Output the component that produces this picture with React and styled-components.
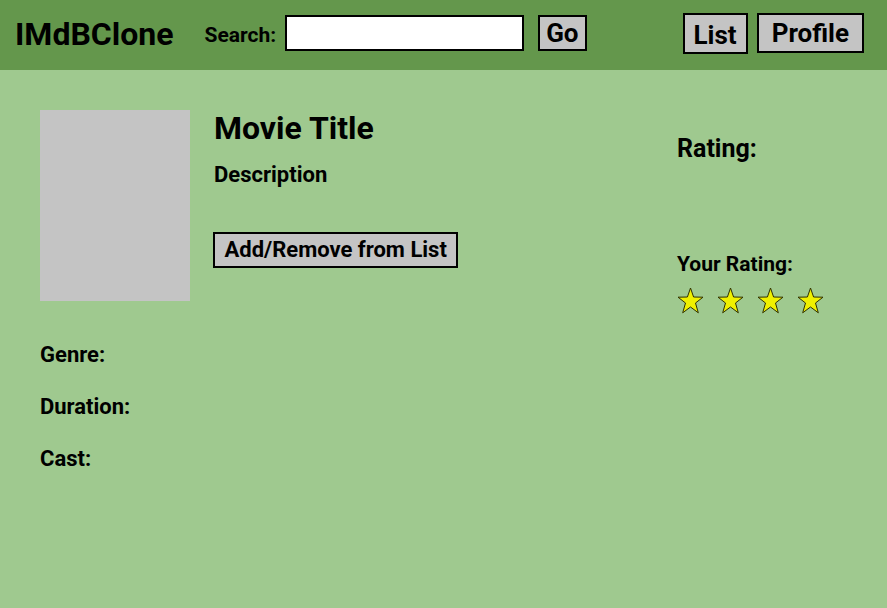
import React from "react";
import styled, { createGlobalStyle } from "styled-components";

const Global = createGlobalStyle`
  html, body { margin: 0; padding: 0; }
  body {
    font-family: Roboto, "Liberation Sans", sans-serif;
    background: #9fc98f;
    color: #000;
  }
  * { box-sizing: border-box; }
`;

const Page = styled.div`
  min-height: 608px;
  background: #9fc98f;
`;

const Header = styled.header`
  height: 70px;
  background: #64974c;
  display: flex;
  align-items: center;
  padding: 0 23px 4px 15px;
`;

const Logo = styled.div`
  font-size: 32px;
  font-weight: 700;
  margin: 2px 31px 0 0;
`;

const SearchLabel = styled.label`
  font-size: 21px;
  font-weight: 700;
  margin: 4px 9px 0 0;
`;

const SearchInput = styled.input`
  width: 239px;
  height: 36px;
  border: 2px solid #000;
  background: #fff;
  margin: 0 14px 0 0;
  padding: 0 4px;
  font-family: inherit;
`;

const Btn = styled.button`
  font-family: Roboto, "Liberation Sans", sans-serif;
  font-weight: 700;
  font-size: ${(p) => p.$size || 26}px;
  background: #c4c4c4;
  border: 2px solid #000;
  color: #000;
  padding: ${(p) => p.$padTop || 0}px ${(p) => p.$padX ?? 10}px 0;
  height: ${(p) => p.$h || 36}px;
  line-height: 1;
  display: inline-flex;
  align-items: center;
  justify-content: center;
  cursor: pointer;
`;

const Spacer = styled.div`
  flex: 1;
`;

const NavGroup = styled.div`
  display: flex;
  gap: 9px;
  align-items: center;
`;

const Main = styled.main`
  display: flex;
  padding: 40px 40px 0 40px;
`;

const LeftCol = styled.div`
  flex: 1;
`;

const TopRow = styled.div`
  display: flex;
  gap: 24px;
`;

const Poster = styled.div`
  width: 150px;
  height: 191px;
  background: #c4c4c4;
  flex-shrink: 0;
`;

const Info = styled.div`
  display: flex;
  flex-direction: column;
  align-items: flex-start;
`;

const Title = styled.h1`
  font-size: 32px;
  font-weight: 700;
  margin: 0;
  line-height: 37px;
`;

const Desc = styled.p`
  font-size: 22px;
  font-weight: 700;
  margin: 15px 0 0 0;
  line-height: 26px;
`;

const ActionBtn = styled(Btn)`
  margin-top: 44px;
  margin-left: -1px;
`;

const Details = styled.div`
  margin-top: 41px;
  display: flex;
  flex-direction: column;
  gap: 26px;
`;

const DetailRow = styled.div`
  font-size: 22px;
  font-weight: 700;
  line-height: 26px;
`;

const RightCol = styled.aside`
  width: 170px;
  display: flex;
  flex-direction: column;
`;

const RatingLabel = styled.h2`
  font-size: 25px;
  font-weight: 700;
  margin: 24px 0 0 0;
  line-height: 30px;
`;

const YourRating = styled.h3`
  font-size: 21px;
  font-weight: 700;
  margin: 88px 0 0 0;
  line-height: 25px;
`;

const Stars = styled.div`
  display: flex;
  gap: 13px;
  margin-top: 10px;
`;

const StarSvg = styled.svg`
  width: 27px;
  height: 27px;
  display: block;
`;

const Star = () => (
  <StarSvg viewBox="0 0 27 27">
    <polygon
      points="13.5,1 16.6,10 26,10.2 18.5,16 21.3,25.8 13.5,20 5.7,25.8 8.5,16 1,10.2 10.4,10"
      fill="#f0f000"
      stroke="#2f3000"
      strokeWidth="1"
    />
  </StarSvg>
);

export default function App() {
  return (
    <Page>
      <Global />
      <Header>
        <Logo>IMdBClone</Logo>
        <SearchLabel htmlFor="q">Search:</SearchLabel>
        <SearchInput id="q" type="text" />
        <Btn $padX={6}>Go</Btn>
        <Spacer />
        <NavGroup>
          <Btn $h={41} $padX={9} $padTop={4}>List</Btn>
          <Btn $h={40} $padX={13}>Profile</Btn>
        </NavGroup>
      </Header>
      <Main>
        <LeftCol>
          <TopRow>
            <Poster />
            <Info>
              <Title>Movie Title</Title>
              <Desc>Description</Desc>
              <ActionBtn $size={22} $padX={9.5}>Add/Remove from List</ActionBtn>
            </Info>
          </TopRow>
          <Details>
            <DetailRow>Genre:</DetailRow>
            <DetailRow>Duration:</DetailRow>
            <DetailRow>Cast:</DetailRow>
          </Details>
        </LeftCol>
        <RightCol>
          <RatingLabel>Rating:</RatingLabel>
          <YourRating>Your Rating:</YourRating>
          <Stars>
            <Star />
            <Star />
            <Star />
            <Star />
          </Stars>
        </RightCol>
      </Main>
    </Page>
  );
}
